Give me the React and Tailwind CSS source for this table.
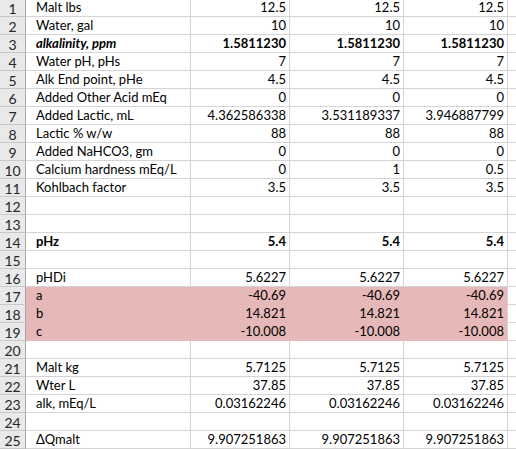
import React from "react";

const rows = [
  ["Malt lbs", "12.5", "12.5", "12.5"],
  ["Water, gal", "10", "10", "10"],
  ["alkalinity, ppm", "1.5811230", "1.5811230", "1.5811230", "bi"],
  ["Water pH, pHs", "7", "7", "7"],
  ["Alk End point, pHe", "4.5", "4.5", "4.5"],
  ["Added Other Acid mEq", "0", "0", "0"],
  ["Added Lactic, mL", "4.362586338", "3.531189337", "3.946887799"],
  ["Lactic % w/w", "88", "88", "88"],
  ["Added NaHCO3, gm", "0", "0", "0"],
  ["Calcium hardness mEq/L", "0", "1", "0.5"],
  ["Kohlbach factor", "3.5", "3.5", "3.5"],
  ["", "", "", ""],
  ["", "", "", ""],
  ["pHz", "5.4", "5.4", "5.4", "b"],
  ["", "", "", ""],
  ["pHDi", "5.6227", "5.6227", "5.6227"],
  ["a", "-40.69", "-40.69", "-40.69", "p"],
  ["b", "14.821", "14.821", "14.821", "p"],
  ["c", "-10.008", "-10.008", "-10.008", "p"],
  ["", "", "", ""],
  ["Malt kg", "5.7125", "5.7125", "5.7125"],
  ["Wter L", "37.85", "37.85", "37.85"],
  ["alk, mEq/L", "0.03162246", "0.03162246", "0.03162246"],
  ["", "", "", ""],
  ["\u0394Qmalt", "9.907251863", "9.907251863", "9.907251863"],
];

export default function App() {
  return (
    <div className="w-[516px] h-[449px] overflow-hidden bg-white">
      <div
        className="mt-[-1px] grid grid-cols-[26px_165px_99px_114px_104px_1fr] auto-rows-[18px] text-[13px] text-black"
        style={{ fontFamily: "Lato, 'Liberation Sans', sans-serif" }}
      >
        {rows.map((r, i) => {
          const [label, b, c, d, f] = r;
          const pink = f === "p";
          const bold = f === "b" || f === "bi";
          const cellBase = pink
            ? "bg-[#e6b8b7] border-b border-r border-[#e6b8b7]"
            : "bg-white border-b border-r border-[#d4d4d4]";
          const vcls = `${cellBase} flex items-center justify-end pr-[3px] pt-[1px] ${bold ? "font-bold" : ""}`;
          return (
            <React.Fragment key={i}>
              <div className="bg-[#e9e9e9] border-b border-r border-b-[#c8c8c8] border-r-[#a8a8a8] flex items-center justify-center pt-[1px] text-[14px] text-[#262626]">
                {i + 1}
              </div>
              <div
                className={`${cellBase} flex items-center pl-[10px] pt-[1px] whitespace-nowrap ${bold ? "font-bold" : ""} ${f === "bi" ? "italic" : ""}`}
              >
                {label}
              </div>
              <div className={vcls}>{b}</div>
              <div className={vcls}>{c}</div>
              <div className={`${vcls} ${pink ? "border-r-[#d4d4d4]" : ""}`}>{d}</div>
              <div className="bg-white border-b border-[#d4d4d4]"></div>
            </React.Fragment>
          );
        })}
      </div>
    </div>
  );
}
